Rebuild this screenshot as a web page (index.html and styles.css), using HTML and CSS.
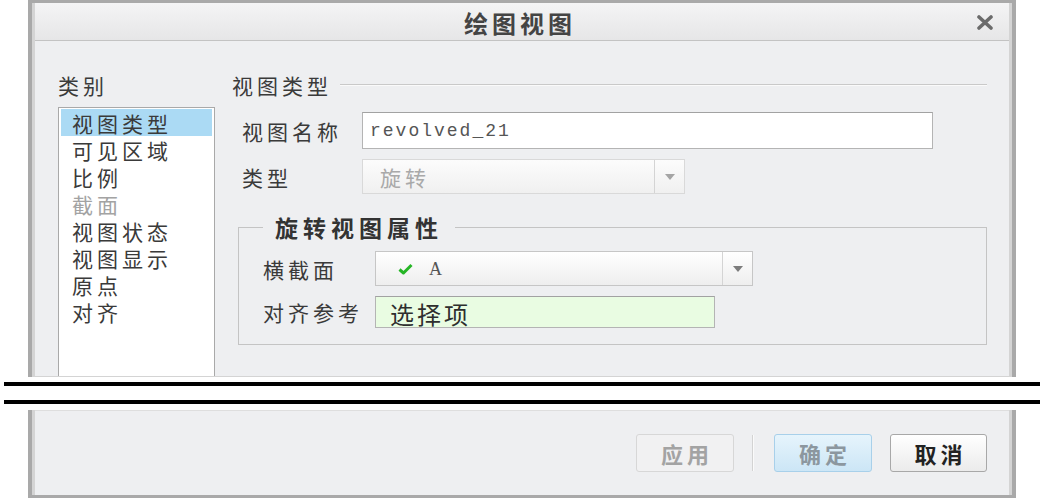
FILE: index.html
```html
<!DOCTYPE html>
<html lang="zh-CN">
<head>
  <meta charset="UTF-8" />
  <title>绘图视图</title>
  <link rel="stylesheet" href="styles.css">
</head>
<body>
  <!-- 上半部分：对话框主体 -->
  <div class="window window-top">
    <div class="titlebar">
      <span></span>
      <span class="title">绘图视图</span>
      <span class="close">
        <svg width="16" height="15" viewBox="0 0 16 15">
          <path d="M2 2 L14 13 M14 2 L2 13" stroke="#6b6b6b" stroke-width="3.6" stroke-linecap="round" fill="none" />
        </svg>
      </span>
    </div>

    <div class="body">
      <!-- 类别 -->
      <div class="side">
        <div class="caption">类别</div>
        <ul class="list">
          <li class="selected">视图类型</li>
          <li>可见区域</li>
          <li>比例</li>
          <li class="disabled">截面</li>
          <li>视图状态</li>
          <li>视图显示</li>
          <li>原点</li>
          <li>对齐</li>
        </ul>
      </div>

      <div class="main">
        <div class="section-head">
          <span>视图类型</span>
          <span class="rule"></span>
        </div>

        <div class="row first">
          <label class="row-label">视图名称</label>
          <div class="textbox name-box">revolved_21</div>
        </div>

        <div class="row">
          <label class="row-label">类型</label>
          <div class="combo combo-disabled type-box">
            <span class="combo-text">旋转</span>
            <span class="combo-arrow">
              <svg width="10" height="6" viewBox="0 0 10 6"><path d="M0 0 H10 L5 6 Z" fill="#a5a5a5" /></svg>
            </span>
          </div>
        </div>

        <!-- 旋转视图属性 -->
        <fieldset class="group">
          <legend>旋转视图属性</legend>
          <div class="group-row">
            <label class="group-label">横截面</label>
            <div class="combo section-box">
              <span class="combo-text">
                <svg class="check" width="15" height="12" viewBox="0 0 15 12">
                  <path d="M1.5 6.5 L5.5 10 L13.5 2" stroke="#25b525" stroke-width="3" fill="none" stroke-linejoin="round" />
                </svg>
                <span class="serif-a">A</span>
              </span>
              <span class="combo-arrow">
                <svg width="10" height="6" viewBox="0 0 10 6"><path d="M0 0 H10 L5 6 Z" fill="#7c7c7c" /></svg>
              </span>
            </div>
          </div>
          <div class="group-row">
            <label class="group-label">对齐参考</label>
            <div class="textbox pick-box">选择项</div>
          </div>
        </fieldset>
      </div>
    </div>
  </div>

  <!-- 截断线 -->
  <div class="cut">
    <div class="cut-line"></div>
    <div class="cut-line"></div>
  </div>

  <!-- 下半部分：按钮 -->
  <div class="window window-bottom">
    <div class="footer">
      <button type="button" class="btn btn-off">应用</button>
      <span class="divider"></span>
      <button type="button" class="btn btn-ok">确定</button>
      <button type="button" class="btn btn-cancel">取消</button>
    </div>
  </div>
</body>
</html>
```

FILE: styles.css
```css
body {
  margin: 0;
  background: #fff;
  font-family: "Noto Sans CJK SC", "Noto Sans", sans-serif;
  color: #333;
}

/* 窗口外框 */
.window {
  box-sizing: border-box;
  width: 988px;
  margin-left: 28px;
  border: 4px solid #a9a9a9;
  padding: 0 3px;
  background: #d4d4d4;
}
.window-top {
  height: 377px;
  border-top-width: 3px;
  border-bottom: 0;
}
.window-bottom {
  border-top: 0;
  border-bottom-width: 3px;
}

/* 标题栏 */
.titlebar {
  display: grid;
  grid-template-columns: 1fr auto 1fr;
  align-items: center;
  height: 38px;
  padding-top: 1px;
  box-sizing: border-box;
  border-bottom: 1px solid #c3c3c3;
  background: linear-gradient(#f4f4f5, #e6e6e7);
}
.title {
  font-size: 24px;
  font-weight: bold;
  letter-spacing: 4px;
  color: #444;
  padding-right: 4px;
}
.close {
  justify-self: end;
  padding-right: 16px;
  line-height: 0;
}

/* 主体 */
.body {
  display: flex;
  gap: 17px;
  height: 335px;
  box-sizing: border-box;
  padding: 31px 22px 0 23px;
  background: #eeeff1;
}
.side {
  width: 157px;
  display: flex;
  flex-direction: column;
}
.caption,
.section-head,
.row-label,
.group-label {
  font-size: 21px;
  letter-spacing: 4px;
  line-height: 26px;
  color: #3a3a3a;
}
.list {
  flex: 1;
  margin: 9px 0 0;
  padding: 1px 2px;
  list-style: none;
  background: #fff;
  border: 1px solid #a9a9a9;
  border-bottom: 0;
}
.list li {
  height: 27px;
  padding: 2px 0 0 11px;
  box-sizing: border-box;
  font-size: 21px;
  letter-spacing: 4px;
  line-height: 25px;
  color: #3a3a3a;
}
.list li.selected {
  background: #abdaf4;
}
.list li.disabled {
  color: #a3a3a3;
}

.main {
  flex: 1;
}
.section-head {
  display: flex;
  align-items: center;
}
.rule {
  flex: 1;
  margin-left: 8px;
  border-top: 1px solid #c9c9c9;
  border-bottom: 1px solid #fafafa;
}

.row {
  display: flex;
  align-items: center;
  margin-top: 10px;
  padding-left: 10px;
}
.row.first {
  margin-top: 14px;
}
.row-label {
  width: 120px;
}

/* 输入框 */
.textbox {
  box-sizing: border-box;
  display: flex;
  align-items: center;
  background: #fff;
  border: 1px solid #b4b4b4;
  border-top-color: #a2a2a2;
}
.name-box {
  width: 571px;
  height: 37px;
  padding-left: 7px;
  font-family: "Liberation Mono", monospace;
  font-size: 18px;
  letter-spacing: 2px;
  color: #555;
}
.pick-box {
  width: 340px;
  height: 32px;
  padding: 2px 0 0 14px;
  background: #e9fce2;
  font-size: 24px;
  letter-spacing: 3px;
  color: #2e2e2e;
}

/* 下拉框 */
.combo {
  box-sizing: border-box;
  display: flex;
  height: 35px;
  background: linear-gradient(#ffffff, #eeeeee);
  border: 1px solid #c6c6c6;
}
.combo-text {
  flex: 1;
  display: flex;
  align-items: center;
}
.combo-arrow {
  width: 29px;
  display: flex;
  align-items: center;
  justify-content: center;
  border-left: 1px solid #d4d4d4;
}
.combo-disabled {
  background: linear-gradient(#fcfcfc, #f0f0f0);
  border-color: #d9d9d9;
}
.type-box {
  width: 323px;
}
.type-box .combo-text {
  padding-left: 17px;
  font-size: 21px;
  letter-spacing: 4px;
  color: #a9a9a9;
}
.section-box {
  width: 378px;
}
.section-box .combo-text {
  padding-left: 22px;
}
.check {
  margin-right: 16px;
}
.serif-a {
  font-family: "Liberation Serif", serif;
  font-size: 18px;
  color: #555;
  padding-top: 2px;
}

/* 分组框 */
.group {
  margin: 20px 0 0 6px;
  padding: 11px 0 16px 24px;
  border: 1px solid #c4c4c4;
  min-width: 0;
}
.group legend {
  margin-left: 0;
  padding: 0 12px;
  font-size: 23px;
  font-weight: bold;
  letter-spacing: 5px;
  line-height: 26px;
  color: #333;
}
.group-row {
  display: flex;
  align-items: center;
}
.group-row + .group-row {
  margin-top: 10px;
}
.group-label {
  width: 112px;
}

/* 截断线 */
.cut {
  padding: 5px 0 6px 4px;
}
.cut-line {
  height: 4px;
  background: #000;
}
.cut-line + .cut-line {
  margin-top: 14px;
}

/* 底部按钮区 */
.footer {
  display: flex;
  align-items: center;
  justify-content: flex-end;
  height: 85px;
  box-sizing: border-box;
  padding-right: 22px;
  border-top: 1px solid #dedede;
  background: #eeeff1;
}
.btn {
  box-sizing: border-box;
  width: 98px;
  height: 38px;
  padding: 0;
  border-radius: 3px;
  font-family: "Noto Sans CJK SC", sans-serif;
  font-size: 22px;
  font-weight: bold;
  letter-spacing: 4px;
  text-indent: 4px;
}
.btn-off {
  background: #f1f1f2;
  border: 1px solid #d7d7d7;
  color: #a3a3a3;
}
.divider {
  width: 1px;
  height: 36px;
  margin: 0 20px 0 18px;
  background: #d3d3d3;
  border-right: 1px solid #fafafa;
}
.btn-ok {
  background: linear-gradient(#e6f4fc, #cce6f6);
  border: 1px solid #a8d0ea;
  color: #8c979f;
}
.btn-cancel {
  margin-left: 18px;
  width: 97px;
  background: linear-gradient(#ffffff, #ebebeb);
  border: 1px solid #a8a8a8;
  color: #222;
}
```
